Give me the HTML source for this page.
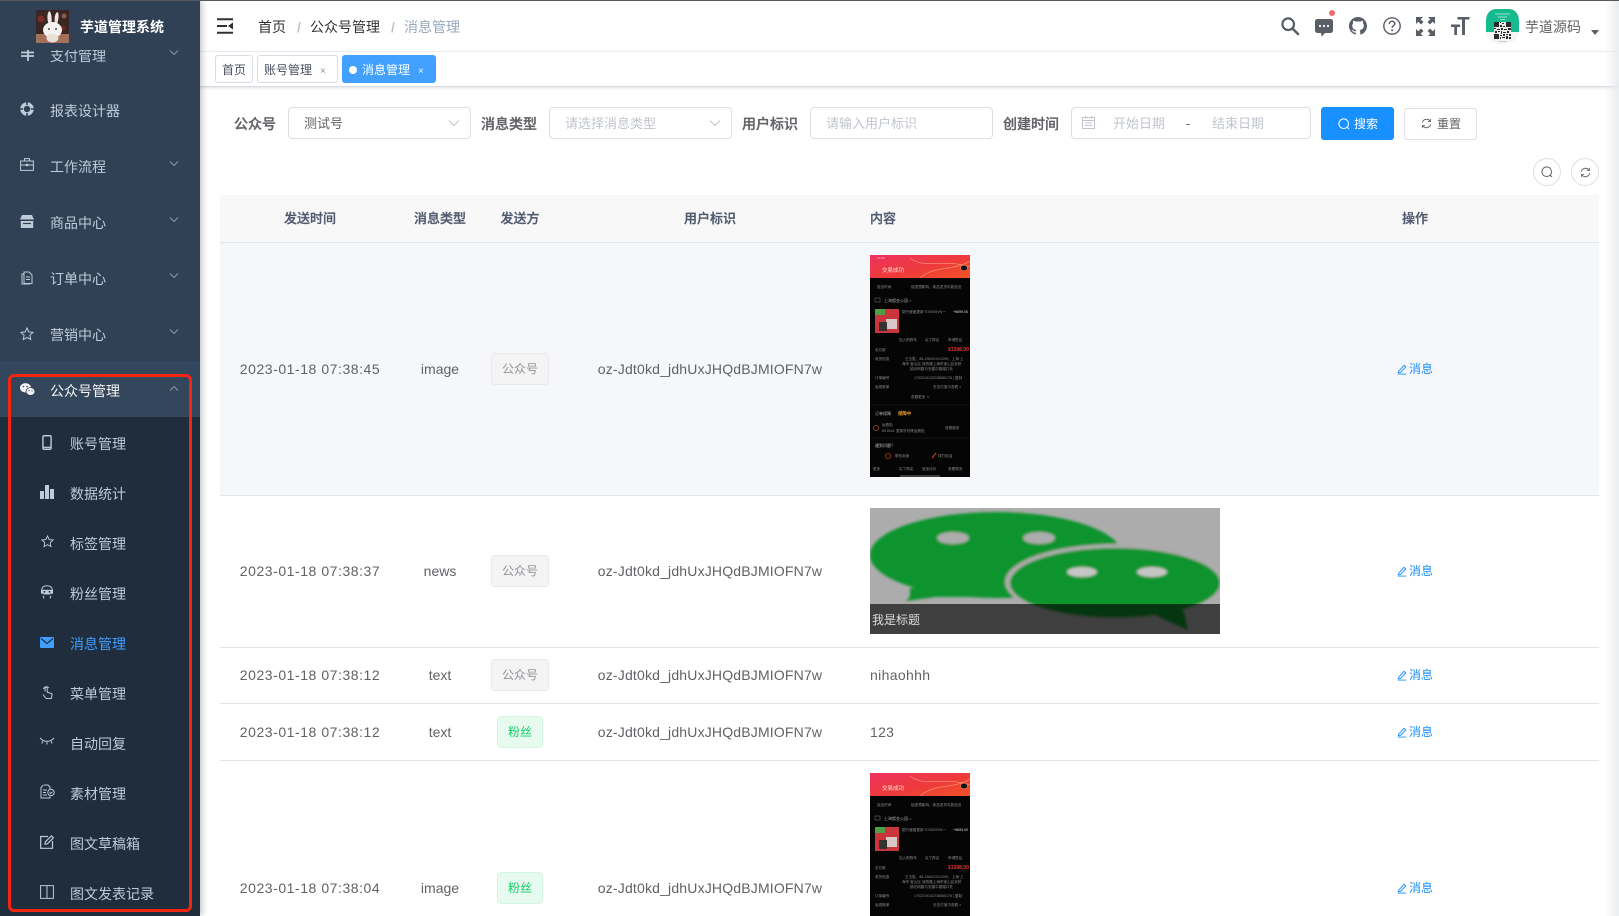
<!DOCTYPE html>
<html lang="zh-CN"><head><meta charset="utf-8"><title>消息管理</title>
<style>
html,body{margin:0;padding:0;width:1619px;height:916px;overflow:hidden;background:#fff}
body{position:relative;font-family:"Liberation Sans","Noto Sans CJK SC",sans-serif;font-size:14px;color:#606266;filter:blur(.35px)}
.a{position:absolute}
.t{position:absolute;white-space:nowrap;transform:translateY(-50%);line-height:20px}
.c{position:absolute;white-space:nowrap;transform:translate(-50%,-50%);line-height:20px}
svg{position:absolute;overflow:visible}
#side{position:absolute;left:0;top:0;width:200px;height:916px;background:#304156;overflow:hidden;box-shadow:2px 0 6px rgba(0,21,41,.25);z-index:3}
#side .t{margin:1px 0 0 -1px}
.m{color:#bfcbd9;font-size:14px}
.ic{fill:none;stroke:#bfcbd9;stroke-width:1}
.fl{fill:#bfcbd9;stroke:none}
.box{position:absolute;box-sizing:border-box;border:1px solid #dcdfe6;border-radius:4px;background:#fff;height:32px;top:107px}
.lb{font-weight:500;color:#606266;font-size:14px;margin-top:1px;-webkit-text-stroke:.3px #606266}
.ph{color:#c0c4cc;font-size:13px;margin-top:1px}
.th{font-weight:500;color:#515a6e;font-size:13px;margin-top:1px;-webkit-text-stroke:.3px #515a6e}
.ln{position:absolute;left:220px;width:1379px;height:1px;background:#dfe6ec}
.tag{position:absolute;box-sizing:border-box;height:32px;line-height:31px;text-align:center;font-size:12px;border-radius:4px;border:1px solid}
.g{background:#f4f4f5;border-color:#e9e9eb;color:#909399;left:491px;width:58px}
.f{background:#e7faf0;border-color:#d0f5e0;color:#13ce66;left:497px;width:46px}
.d{font-size:14px;letter-spacing:.55px;color:#606266}
.u{font-size:14px;letter-spacing:.18px;color:#606266}
.op{color:#1890ff;font-size:12px}
.pt{font-family:"Liberation Sans","Noto Sans CJK SC",sans-serif;fill:#8b8b8b;font-size:3.6px}
.ph-img{filter:blur(.35px)}
</style></head><body>

<!-- top strip -->
<div class="a" style="left:0;top:0;width:1619px;height:1px;background:#55585c;z-index:9"></div>

<!-- navbar -->
<div class="a" style="left:200px;top:0;width:1419px;height:52px;background:#fff;border-bottom:1px solid #eef0f3;box-sizing:border-box"></div>
<svg style="left:217px;top:18px" width="17" height="16" viewBox="0 0 17 16"><path d="M0 1.200h16M0 8h10M0 14.800h16" stroke="#303133" stroke-width="2" fill="none"/><path d="M11 8l5-3.500v7z" fill="#303133"/></svg>
<span class="t" style="left:258px;top:27px;color:#303133;font-size:14px">首页</span>
<span class="t" style="left:297px;top:27px;color:#c0c4cc;font-weight:700">/</span>
<span class="t" style="left:310px;top:27px;color:#303133;font-size:14px">公众号管理</span>
<span class="t" style="left:391px;top:27px;color:#c0c4cc;font-weight:700">/</span>
<span class="t" style="left:404px;top:27px;color:#97a8be;font-size:14px">消息管理</span>

<!-- top right icons -->
<svg style="left:1281px;top:17px" width="18" height="18" viewBox="0 0 18 18"><circle cx="7.200" cy="7.200" r="5.800" fill="none" stroke="#5a5e66" stroke-width="2.200"/><path d="M11.500 11.500L17 17" stroke="#5a5e66" stroke-width="2.600" stroke-linecap="round"/></svg>
<svg style="left:1315px;top:19px" width="18" height="18" viewBox="0 0 18 18"><path d="M2.500 0h13A2.500 2.500 0 0 1 18 2.500v9a2.500 2.500 0 0 1-2.500 2.500H10l-3.400 3.600L6 14H2.500A2.500 2.500 0 0 1 0 11.500v-9A2.500 2.500 0 0 1 2.500 0z" fill="#5a5e66"/><circle cx="5" cy="7" r="1.100" fill="#fff"/><circle cx="9" cy="7" r="1.100" fill="#fff"/><circle cx="13" cy="7" r="1.100" fill="#fff"/></svg>
<div class="a" style="left:1329px;top:10px;width:6px;height:6px;border-radius:50%;background:#f56c6c"></div>
<svg style="left:1349px;top:17px" width="18" height="18" viewBox="0 0 16 16"><path fill="#5a5e66" d="M8 0C3.580 0 0 3.580 0 8c0 3.540 2.290 6.530 5.470 7.590.4.070.55-.17.55-.38 0-.19-.01-.82-.01-1.490-2.010.37-2.530-.49-2.690-.94-.09-.23-.48-.94-.82-1.130-.28-.15-.68-.52-.01-.53.630-.01 1.080.58 1.230.82.720 1.210 1.870.87 2.330.66.070-.52.280-.87.510-1.070-1.780-.2-3.640-.89-3.640-3.950 0-.87.310-1.590.820-2.150-.08-.2-.36-1.020.08-2.120 0 0 .67-.21 2.200.82.640-.18 1.320-.27 2-.27s1.360.09 2 .27c1.530-1.040 2.200-.82 2.200-.82.440 1.100.16 1.920.08 2.120.51.560.82 1.270.82 2.150 0 3.070-1.870 3.750-3.650 3.950.29.250.54.730.54 1.480 0 1.070-.01 1.930-.01 2.200 0 .21.15.46.55.38A8.010 8.010 0 0 0 16 8c0-4.420-3.580-8-8-8z"/></svg>
<svg style="left:1383px;top:17px" width="18" height="18" viewBox="0 0 18 18"><circle cx="9" cy="9" r="8.200" fill="none" stroke="#5a5e66" stroke-width="1.400"/><path d="M6.300 7c0-1.700 1.300-2.700 2.800-2.700S11.800 5.300 11.800 6.800c0 1.800-2.700 2-2.700 4" fill="none" stroke="#5a5e66" stroke-width="1.500"/><circle cx="9.100" cy="13.200" r="1" fill="#5a5e66"/></svg>
<svg style="left:1416px;top:17px" width="19" height="19" viewBox="0 0 19 19"><path fill="#5a5e66" d="M0 0h7L4.700 2.300 7.500 5 5 7.500 2.300 4.700 0 7zM19 0v7l-2.300-2.300L14 7.500 11.500 5l2.800-2.700L12 0zM0 19v-7l2.300 2.300L5 11.500 7.500 14l-2.800 2.700L7 19zM19 19h-7l2.300-2.300L11.500 14l2.500-2.500 2.700 2.800L19 12z"/></svg>
<svg style="left:1451px;top:17px" width="19" height="18" viewBox="0 0 19 18"><path fill="#5a5e66" d="M6.500 0H18.500V2.500H14V18H11V2.500H6.500zM0 7.500H9V10H6V18H3.300V10H0z"/></svg>
<!-- avatar -->
<svg style="left:1486px;top:9px" width="33" height="35" viewBox="0 0 33 35"><path d="M0 23V12C0 4 5 0 10 0h13c5 0 10 4 10 12v11z" fill="#17b98f"/><path d="M0 23h33c0 7-7 12-16.500 12S0 30 0 23z" fill="#f4f6f5"/><rect x="8" y="13" width="17" height="17" fill="#ededed"/>
<path fill="#2b2b2b" d="M8 13h5v5H8zM20 13h5v5h-5zM8 25h5v5H8zM14 13h1v1h-1zM16 14h2v1h-2zM14 16h2v2h-2zM17 17h2v1h-2zM8 19h2v1H8zM11 20h3v1h-3zM15 19h2v2h-2zM18 20h3v1h-3zM22 19h3v2h-3zM9 22h2v2H9zM12 22h2v1h-2zM15 22h1v3h-1zM17 23h3v1h-3zM21 22h2v2h-2zM14 26h2v1h-2zM17 25h2v2h-2zM20 25h2v1h-2zM23 25h2v2h-2zM14 28h1v2h-1zM16 28h3v1h-3zM20 27h2v3h-2zM23 28h2v2h-2z"/>
<path d="M9 5h15M12 8h9M14 10.500h5" stroke="#bff0e2" stroke-width=".8"/><path d="M12 32.500h9" stroke="#bbb" stroke-width=".7"/></svg>
<span class="t" style="left:1525px;top:27px;font-size:14px;color:#606266">芋道源码</span>
<div class="a" style="left:1591px;top:30px;border:4px solid transparent;border-top:5px solid #5a5e66;border-bottom:0"></div>

<!-- tags view -->
<div class="a" style="left:200px;top:52px;width:1419px;height:34px;background:#fff;border-bottom:1px solid #d8dce5;box-shadow:0 1px 3px rgba(0,0,0,.12);box-sizing:content-box"></div>
<div class="a" style="left:215px;top:55px;width:38px;height:28px;box-sizing:border-box;border:1px solid #d8dce5;border-radius:3px;background:#fff;text-align:center;line-height:29px;font-size:12px;color:#495060">首页</div>
<div class="a" style="left:257px;top:55px;width:81px;height:28px;box-sizing:border-box;border:1px solid #d8dce5;border-radius:3px;background:#fff;line-height:29px;font-size:12px;color:#495060;padding-left:6px">账号管理<span style="position:absolute;left:62px;top:1px;font-size:10px;color:#909399">×</span></div>
<div class="a" style="left:342px;top:55px;width:94px;height:28px;box-sizing:border-box;border-radius:3px;background:#42a1ff;line-height:31px;font-size:12px;color:#fff;padding-left:20px"><span style="position:absolute;left:7px;top:11px;width:8px;height:8px;border-radius:50%;background:#fff"></span>消息管理<span style="position:absolute;left:76px;top:1px;font-size:10px;color:#e8f3ff">×</span></div>

<!-- form -->
<span class="t lb" style="left:234px;top:123px">公众号</span>
<div class="box" style="left:288px;width:183px"></div>
<span class="t" style="left:304px;top:124px;font-size:13px;color:#606266">测试号</span>
<svg style="left:448px;top:119px" width="12" height="8" viewBox="0 0 12 8"><path d="M1 1.500l5 5 5-5" fill="none" stroke="#c0c4cc" stroke-width="1"/></svg>
<span class="t lb" style="left:481px;top:123px">消息类型</span>
<div class="box" style="left:549px;width:183px"></div>
<span class="t ph" style="left:565px;top:123px">请选择消息类型</span>
<svg style="left:709px;top:119px" width="12" height="8" viewBox="0 0 12 8"><path d="M1 1.500l5 5 5-5" fill="none" stroke="#c0c4cc" stroke-width="1"/></svg>
<span class="t lb" style="left:742px;top:123px">用户标识</span>
<div class="box" style="left:810px;width:183px"></div>
<span class="t ph" style="left:826px;top:123px">请输入用户标识</span>
<span class="t lb" style="left:1003px;top:123px">创建时间</span>
<div class="box" style="left:1071px;width:240px"></div>
<svg style="left:1082px;top:116px" width="13" height="13" viewBox="0 0 13 13"><path d="M.5 1.500h12v11H.5zM.5 4.500h12M3 7h7M3 9.500h7M3.500 0v2.500M9.500 0v2.500" fill="none" stroke="#c0c4cc" stroke-width="1"/></svg>
<span class="t ph" style="left:1113px;top:123px">开始日期</span>
<span class="c" style="left:1188px;top:124px;font-size:13px;color:#606266">-</span>
<span class="t ph" style="left:1212px;top:123px">结束日期</span>

<div class="a" style="left:1321px;top:107px;width:73px;height:33px;border-radius:3px;background:#1890ff"></div>
<svg style="left:1338px;top:118px" width="12" height="12" viewBox="0 0 12 12"><circle cx="5.700" cy="5.700" r="4.800" fill="none" stroke="#fff" stroke-width="1"/><path d="M9 9l2 2" stroke="#fff" stroke-width="1"/></svg>
<span class="t" style="left:1354px;top:124px;font-size:12px;color:#fff">搜索</span>
<div class="a" style="left:1404px;top:108px;width:73px;height:32px;box-sizing:border-box;border:1px solid #dcdfe6;border-radius:3px;background:#fff"></div>
<svg style="left:1421px;top:118px" width="11" height="11" viewBox="0 0 12 12"><path d="M1.500 5A4.700 4.700 0 0 1 10 3.500M10.500 7A4.700 4.700 0 0 1 2 8.500" fill="none" stroke="#606266" stroke-width="1"/><path d="M10.500 1v3h-3M1.500 11V8h3" fill="none" stroke="#606266" stroke-width=".8"/></svg>
<span class="t" style="left:1437px;top:124px;font-size:12px;color:#606266">重置</span>

<div class="a" style="left:1533px;top:158px;width:28px;height:28px;box-sizing:border-box;border:1px solid #dcdfe6;border-radius:50%"></div>
<svg style="left:1541px;top:166px" width="12" height="12" viewBox="0 0 12 12"><circle cx="5.700" cy="5.700" r="4.800" fill="none" stroke="#606266" stroke-width="1"/><path d="M9 9l2 2" stroke="#606266" stroke-width="1"/></svg>
<div class="a" style="left:1571px;top:158px;width:28px;height:28px;box-sizing:border-box;border:1px solid #dcdfe6;border-radius:50%"></div>
<svg style="left:1580px;top:167px" width="11" height="11" viewBox="0 0 12 12"><path d="M1.500 5A4.700 4.700 0 0 1 10 3.500M10.500 7A4.700 4.700 0 0 1 2 8.500" fill="none" stroke="#606266" stroke-width="1"/><path d="M10.500 1v3h-3M1.500 11V8h3" fill="none" stroke="#606266" stroke-width=".8"/></svg>

<!-- table -->
<div class="a" style="left:220px;top:195px;width:1379px;height:47px;background:#f8f8f9"></div>
<div class="a" style="left:220px;top:243px;width:1379px;height:252px;background:#f5f7fa"></div>
<div class="ln" style="top:242px"></div>
<div class="ln" style="top:495px"></div>
<div class="ln" style="top:647px"></div>
<div class="ln" style="top:703px"></div>
<div class="ln" style="top:760px"></div>
<span class="c th" style="left:310px;top:218px">发送时间</span>
<span class="c th" style="left:440px;top:218px">消息类型</span>
<span class="c th" style="left:520px;top:218px">发送方</span>
<span class="c th" style="left:710px;top:218px">用户标识</span>
<span class="t th" style="left:870px;top:218px">内容</span>
<span class="c th" style="left:1415px;top:218px">操作</span>

<!-- row 1 -->
<span class="c d" style="left:310px;top:369px">2023-01-18 07:38:45</span>
<span class="c" style="left:440px;top:369px;font-size:14px">image</span>
<div class="tag g" style="top:353px">公众号</div>
<span class="c u" style="left:710px;top:369px">oz-Jdt0kd_jdhUxJHQdBJMIOFN7w</span>
<svg class="ph-img" style="left:870px;top:255px" width="100" height="222" viewBox="0 0 100 222">
<defs><linearGradient id="pg" x1="0" x2="1" y1="0" y2="1"><stop offset="0" stop-color="#ee3260"/><stop offset=".55" stop-color="#ee3a3a"/><stop offset="1" stop-color="#f35326"/></linearGradient></defs>
<rect width="100" height="222" fill="#050505"/><rect width="100" height="23" fill="url(#pg)"/>
<path d="M40 3C55 15 75 3 100 12M50 23C65 10 85 16 100 6" stroke="#f89a7a" stroke-width=".6" fill="none"/>
<text x="7" y="4" class="pt" style="fill:#ffd5d5;font-size:3px">12:25</text>
<text x="12" y="17" class="pt" style="fill:#ffe3d8;font-size:5.500px">交易成功</text>
<ellipse cx="94" cy="13" rx="3.500" ry="2.800" fill="#111" stroke="#f6a05a" stroke-width=".5"/>
<text x="7" y="33" class="pt">延迟时间</text><text x="41" y="33" class="pt">促促想影响，商品发货可能延迟</text>
<rect x="5" y="43" width="5" height="4" fill="none" stroke="#777" stroke-width=".5"/><text x="14" y="47" class="pt" style="font-size:4px;fill:#aaa">上海镀金公园 &gt;</text>
<rect x="5" y="54" width="24" height="24" fill="#c8353b"/><rect x="5" y="54" width="10" height="6" fill="#4f9d44"/><rect x="16" y="64" width="11" height="10" fill="#d8c8c8"/><rect x="9" y="67" width="8" height="9" fill="#333"/>
<text x="32" y="58" class="pt">甜行速度更新 ST4000VN一</text><text x="83" y="58" class="pt" style="fill:#ddd">+¥899.00</text>
<text x="29" y="86" class="pt">加入购物车</text><text x="55" y="86" class="pt">买了再买</text><text x="78" y="86" class="pt">申请售后</text>
<text x="5" y="96" class="pt">实付款</text><text x="78" y="96" class="pt" style="fill:#e8322e;font-size:5px;font-weight:700">¥1398.00</text>
<text x="5" y="105" class="pt">收货信息</text><text x="35" y="105" class="pt">王五胜，86-156XXXX1290，上海 上</text><text x="32" y="110" class="pt">海市 宝山区 双桥路上海市宝山区双桥</text><text x="40" y="115" class="pt">镇光明路与安建中路路口处</text>
<text x="5" y="124" class="pt">订单编号</text><text x="44" y="124" class="pt">1702219132238560176 | 复制</text>
<text x="5" y="133" class="pt">返现账单</text><text x="63" y="133" class="pt">去支付宝中查看 &gt;</text>
<text x="41" y="143" class="pt">查看更多 ∨</text>
<path d="M0 150h100" stroke="#222" stroke-width=".6"/>
<text x="5" y="160" class="pt" style="font-size:4px;fill:#bbb">订单保障</text><text x="28" y="160" class="pt" style="font-size:4.400px;fill:#f1a21e;font-weight:700">保障中</text>
<circle cx="6" cy="173" r="2.500" fill="none" stroke="#a5501f" stroke-width=".7"/><text x="12" y="171" class="pt">运费险</text><text x="12" y="177" class="pt">¥0.00x1 退换货可得运费险</text><text x="75" y="174" class="pt">查看服务</text>
<path d="M0 183h100" stroke="#222" stroke-width=".6"/>
<text x="5" y="192" class="pt" style="font-size:4px;fill:#bbb">遇到问题？</text>
<circle cx="18" cy="201" r="2.600" fill="none" stroke="#b8332a" stroke-width=".8"/><text x="25" y="202" class="pt">联系卖家</text>
<path d="M62 203l4-5" stroke="#b8332a" stroke-width="1.400"/><text x="68" y="202" class="pt">拨打电话</text>
<text x="3" y="215" class="pt">更多</text><text x="29" y="215" class="pt">买了再买</text><text x="52" y="215" class="pt">追加评价</text><text x="78" y="215" class="pt">查看物流</text>
<rect x="30" y="220.500" width="40" height="1" fill="#777"/></svg>
<svg style="left:1397px;top:364px" width="10" height="11" viewBox="0 0 12 13"><path d="M2 8.500L8.500 1.500l2 2L4 10l-2.500.5zM1 12h10" fill="none" stroke="#1890ff" stroke-width="1.100"/></svg>
<span class="t op" style="left:1409px;top:369px">消息</span>

<!-- row 2 -->
<span class="c d" style="left:310px;top:571px">2023-01-18 07:38:37</span>
<span class="c" style="left:440px;top:571px;font-size:14px">news</span>
<div class="tag g" style="top:555px">公众号</div>
<span class="c u" style="left:710px;top:571px">oz-Jdt0kd_jdhUxJHQdBJMIOFN7w</span>
<svg style="left:870px;top:508px" width="350" height="126" viewBox="0 0 350 126">
<defs><filter id="bl" x="-5%" y="-5%" width="110%" height="110%"><feGaussianBlur stdDeviation="1.400"/></filter><clipPath id="wc"><rect width="350" height="126"/></clipPath></defs>
<g clip-path="url(#wc)"><rect width="350" height="126" fill="#acacac"/>
<g filter="url(#bl)">
<ellipse cx="126" cy="47" rx="126" ry="43" fill="#10942e"/>
<path d="M50 78L36 93 L95 85z" fill="#10942e"/><path d="M40 80h100v9H40z" fill="#10942e"/>
<ellipse cx="83" cy="30" rx="16" ry="6" fill="#acacac"/><ellipse cx="169" cy="30" rx="16" ry="6" fill="#acacac"/>
<ellipse cx="245" cy="74" rx="110" ry="38" fill="#acacac"/>
<ellipse cx="245" cy="75" rx="105" ry="35" fill="#10942e"/>
<path d="M280 105l38 17-5-22z" fill="#10942e"/>
<ellipse cx="212" cy="64" rx="15" ry="5" fill="#c6c6c6"/><ellipse cx="282" cy="64" rx="15" ry="5" fill="#c6c6c6"/>
</g>
<rect y="96" width="350" height="30" fill="#000" fill-opacity=".63"/></g></svg>
<span class="t" style="left:872px;top:620px;font-size:12px;color:#ddd">我是标题</span>
<svg style="left:1397px;top:566px" width="10" height="11" viewBox="0 0 12 13"><path d="M2 8.500L8.500 1.500l2 2L4 10l-2.500.5zM1 12h10" fill="none" stroke="#1890ff" stroke-width="1.100"/></svg>
<span class="t op" style="left:1409px;top:571px">消息</span>

<!-- row 3 -->
<span class="c d" style="left:310px;top:675px">2023-01-18 07:38:12</span>
<span class="c" style="left:440px;top:675px;font-size:14px">text</span>
<div class="tag g" style="top:659px">公众号</div>
<span class="c u" style="left:710px;top:675px">oz-Jdt0kd_jdhUxJHQdBJMIOFN7w</span>
<span class="t" style="left:870px;top:675px;font-size:14px;letter-spacing:.35px">nihaohhh</span>
<svg style="left:1397px;top:670px" width="10" height="11" viewBox="0 0 12 13"><path d="M2 8.500L8.500 1.500l2 2L4 10l-2.500.5zM1 12h10" fill="none" stroke="#1890ff" stroke-width="1.100"/></svg>
<span class="t op" style="left:1409px;top:675px">消息</span>

<!-- row 4 -->
<span class="c d" style="left:310px;top:732px">2023-01-18 07:38:12</span>
<span class="c" style="left:440px;top:732px;font-size:14px">text</span>
<div class="tag f" style="top:716px">粉丝</div>
<span class="c u" style="left:710px;top:732px">oz-Jdt0kd_jdhUxJHQdBJMIOFN7w</span>
<span class="t" style="left:870px;top:732px;font-size:14px;letter-spacing:.3px">123</span>
<svg style="left:1397px;top:727px" width="10" height="11" viewBox="0 0 12 13"><path d="M2 8.500L8.500 1.500l2 2L4 10l-2.500.5zM1 12h10" fill="none" stroke="#1890ff" stroke-width="1.100"/></svg>
<span class="t op" style="left:1409px;top:732px">消息</span>

<!-- row 5 -->
<span class="c d" style="left:310px;top:888px">2023-01-18 07:38:04</span>
<span class="c" style="left:440px;top:888px;font-size:14px">image</span>
<div class="tag f" style="top:872px">粉丝</div>
<span class="c u" style="left:710px;top:888px">oz-Jdt0kd_jdhUxJHQdBJMIOFN7w</span>
<svg class="ph-img" style="left:870px;top:773px;overflow:hidden" width="100" height="143" viewBox="0 0 100 143">
<rect width="100" height="143" fill="#050505"/><rect width="100" height="23" fill="url(#pg)"/>
<path d="M40 3C55 15 75 3 100 12M50 23C65 10 85 16 100 6" stroke="#f89a7a" stroke-width=".6" fill="none"/>
<text x="12" y="17" class="pt" style="fill:#ffe3d8;font-size:5.500px">交易成功</text>
<ellipse cx="94" cy="13" rx="3.500" ry="2.800" fill="#111" stroke="#f6a05a" stroke-width=".5"/>
<text x="7" y="33" class="pt">延迟时间</text><text x="41" y="33" class="pt">促促想影响，商品发货可能延迟</text>
<rect x="5" y="43" width="5" height="4" fill="none" stroke="#777" stroke-width=".5"/><text x="14" y="47" class="pt" style="font-size:4px;fill:#aaa">上海镀金公园 &gt;</text>
<rect x="5" y="54" width="24" height="24" fill="#c8353b"/><rect x="5" y="54" width="10" height="6" fill="#4f9d44"/><rect x="16" y="64" width="11" height="10" fill="#d8c8c8"/><rect x="9" y="67" width="8" height="9" fill="#333"/>
<text x="32" y="58" class="pt">甜行速度更新 ST4000VN一</text><text x="83" y="58" class="pt" style="fill:#ddd">+¥899.00</text>
<text x="29" y="86" class="pt">加入购物车</text><text x="55" y="86" class="pt">买了再买</text><text x="78" y="86" class="pt">申请售后</text>
<text x="5" y="96" class="pt">实付款</text><text x="78" y="96" class="pt" style="fill:#e8322e;font-size:5px;font-weight:700">¥1398.00</text>
<text x="5" y="105" class="pt">收货信息</text><text x="35" y="105" class="pt">王五胜，86-156XXXX1290，上海 上</text><text x="32" y="110" class="pt">海市 宝山区 双桥路上海市宝山区双桥</text><text x="40" y="115" class="pt">镇光明路与安建中路路口处</text>
<text x="5" y="124" class="pt">订单编号</text><text x="44" y="124" class="pt">1702219132238560176 | 复制</text>
<text x="5" y="133" class="pt">返现账单</text><text x="63" y="133" class="pt">去支付宝中查看 &gt;</text>
</svg>
<svg style="left:1397px;top:883px" width="10" height="11" viewBox="0 0 12 13"><path d="M2 8.500L8.500 1.500l2 2L4 10l-2.500.5zM1 12h10" fill="none" stroke="#1890ff" stroke-width="1.100"/></svg>
<span class="t op" style="left:1409px;top:888px">消息</span>

<!-- right edge shadow -->
<div class="a" style="left:1604px;top:1px;width:15px;height:915px;background:linear-gradient(90deg,rgba(238,240,243,0),rgba(232,234,238,.9))"></div>

<!-- sidebar -->
<div id="side">
<div class="a" style="left:0;top:361px;width:200px;height:56px;background:#33465c"></div>
<div class="a" style="left:0;top:417px;width:200px;height:499px;background:#1f2d3d"></div>

<span class="t m" style="left:51px;top:55px">支付管理</span>
<svg style="left:21px;top:50px" width="14" height="11" viewBox="0 0 14 11"><path d="M0 2.500h13M0 6h13M7 0v11" stroke="#bfcbd9" stroke-width="1.800" fill="none"/></svg>

<!-- logo bar covers clipped item -->
<div class="a" style="left:0;top:0;width:200px;height:50px;background:#304156"></div>
<svg style="left:36px;top:10px" width="33" height="33" viewBox="0 0 33 33"><rect width="33" height="33" fill="#3a2622"/><rect y="24" width="33" height="9" fill="#a5705a"/><circle cx="5" cy="9" r="3.500" fill="#7a2d2a"/><circle cx="28" cy="6" r="2.500" fill="#8a5a4a"/><circle cx="27" cy="18" r="2.500" fill="#6d2a28"/><path d="M12.500 14C10.500 7 11.500 2 13.500 1c2 2 2.500 8 2 13zM19 14c-1-6 0-11 2.500-12 2 2 1 8-.5 12z" fill="#efe6e2"/><ellipse cx="16.500" cy="20" rx="9.500" ry="8" fill="#f6f2ef"/><ellipse cx="16.500" cy="28" rx="6" ry="4.500" fill="#e9e0da"/><circle cx="13" cy="19" r=".9" fill="#222"/><circle cx="20" cy="19" r=".9" fill="#222"/></svg>
<span class="t" style="left:81px;top:26px;color:#fff;font-weight:700;font-size:14px">芋道管理系统</span>
<svg style="left:169px;top:50px" width="10" height="6" viewBox="0 0 10 6"><path d="M1 .5l4 4 4-4" fill="none" stroke="#8a97a6" stroke-width="1"/></svg>

<!-- top-level items -->
<svg style="left:20px;top:102px" width="14" height="14" viewBox="0 0 14 14"><circle cx="7" cy="7" r="5" fill="none" stroke="#bfcbd9" stroke-width="3.500"/><path d="M7 0v3M7 11v3M0 7h3M11 7h3" stroke="#304156" stroke-width="1.600"/></svg>
<span class="t m" style="left:51px;top:110px">报表设计器</span>

<svg style="left:20px;top:158px" width="14" height="13" viewBox="0 0 14 13"><path d="M.6 3h12.800v9.400H.6zM4.500 3V.6h5V3M.6 7h12.800" class="ic"/><rect x="5.800" y="5.800" width="2.400" height="2.400" class="fl"/></svg>
<span class="t m" style="left:51px;top:166px">工作流程</span>
<svg style="left:169px;top:161px" width="10" height="6" viewBox="0 0 10 6"><path d="M1 .5l4 4 4-4" fill="none" stroke="#8a97a6" stroke-width="1"/></svg>

<svg style="left:20px;top:215px" width="14" height="13" viewBox="0 0 14 13"><path d="M2 0h10l2 4.500H0zM.8 6h12.400v7H.8z" class="fl"/><path d="M0 5.500h14" stroke="#304156" stroke-width=".8"/><path d="M3 8.500h8" stroke="#304156" stroke-width="1.200"/></svg>
<span class="t m" style="left:51px;top:222px">商品中心</span>
<svg style="left:169px;top:217px" width="10" height="6" viewBox="0 0 10 6"><path d="M1 .5l4 4 4-4" fill="none" stroke="#8a97a6" stroke-width="1"/></svg>

<svg style="left:21px;top:271px" width="12" height="14" viewBox="0 0 12 14"><path d="M3 1h5l3 3v8.500H3zM3 3H1v10h8" class="ic"/><path d="M5 6h4M5 8.500h4" class="ic"/></svg>
<span class="t m" style="left:51px;top:278px">订单中心</span>
<svg style="left:169px;top:273px" width="10" height="6" viewBox="0 0 10 6"><path d="M1 .5l4 4 4-4" fill="none" stroke="#8a97a6" stroke-width="1"/></svg>

<svg style="left:20px;top:327px" width="14" height="14" viewBox="0 0 14 14"><path d="M7 1l1.800 3.900 4.200.5-3.100 2.900.8 4.200L7 10.400l-3.700 2.100.8-4.200L1 5.400l4.200-.5z" class="ic"/></svg>
<span class="t m" style="left:51px;top:334px">营销中心</span>
<svg style="left:169px;top:329px" width="10" height="6" viewBox="0 0 10 6"><path d="M1 .5l4 4 4-4" fill="none" stroke="#8a97a6" stroke-width="1"/></svg>

<svg style="left:20px;top:383px" width="15" height="13" viewBox="0 0 15 13"><ellipse cx="5.500" cy="4.800" rx="5.500" ry="4.700" fill="#f4f4f5"/><ellipse cx="10.500" cy="8.500" rx="4.500" ry="3.900" fill="#f4f4f5" stroke="#304156" stroke-width=".8"/><circle cx="3.500" cy="3.500" r=".8" fill="#304156"/><circle cx="7" cy="3.500" r=".8" fill="#304156"/><circle cx="9" cy="7.800" r=".6" fill="#304156"/><circle cx="12" cy="7.800" r=".6" fill="#304156"/></svg>
<span class="t" style="left:51px;top:390px;color:#f4f4f5;font-size:14px">公众号管理</span>
<svg style="left:169px;top:385px" width="10" height="6" viewBox="0 0 10 6"><path d="M1 5.500l4-4 4 4" fill="none" stroke="#8a97a6" stroke-width="1"/></svg>

<!-- sub items -->
<svg style="left:42px;top:435px" width="10" height="15" viewBox="0 0 9 14"><rect x=".7" y=".7" width="7.600" height="12.600" rx="1" fill="none" stroke="#bfcbd9" stroke-width="1.300"/><path d="M.7 11.500h7.600" stroke="#bfcbd9" stroke-width="1.200"/></svg>
<span class="t m" style="left:71px;top:443px">账号管理</span>

<svg style="left:40px;top:485px" width="14" height="14" viewBox="0 0 14 14"><path d="M0 6h4v8H0zM5 0h4v14H5zM10 4h4v10h-4z" class="fl"/></svg>
<span class="t m" style="left:71px;top:493px">数据统计</span>

<svg style="left:41px;top:535px" width="13" height="13" viewBox="0 0 14 14"><path d="M7 1l1.800 3.900 4.200.5-3.100 2.900.8 4.200L7 10.400l-3.700 2.100.8-4.200L1 5.400l4.200-.5z" class="ic"/></svg>
<span class="t m" style="left:71px;top:543px">标签管理</span>

<svg style="left:40px;top:585px" width="14" height="14" viewBox="0 0 14 14"><path d="M2 7C1 2 4 .8 7 .8s6 1.200 5 6.200" class="ic" stroke-width="1.400"/><path d="M1 4.800h12v4H1z" class="fl"/><path d="M3 10.500l1 3M11 10.500l-1 3M4 9h6" class="ic"/><circle cx="4.500" cy="6.800" r=".9" fill="#1f2d3d"/><circle cx="9.500" cy="6.800" r=".9" fill="#1f2d3d"/></svg>
<span class="t m" style="left:71px;top:593px">粉丝管理</span>

<svg style="left:40px;top:637px" width="14" height="11" viewBox="0 0 14 11"><rect width="14" height="11" rx="1" fill="#409eff"/><path d="M1 1.500l6 5 6-5" fill="none" stroke="#1f2d3d" stroke-width="1.200"/></svg>
<span class="t" style="left:71px;top:643px;color:#409eff;font-size:14px">消息管理</span>

<svg style="left:42px;top:685px" width="11" height="14" viewBox="0 0 11 14"><path d="M3 6.500V3.200a1.100 1.100 0 0 1 2.200 0v4l4 1.200c.8.300 1 1 .800 1.800L9.300 13.500H4.200L1 9.500" class="ic"/><path d="M1.500 4A3 3 0 0 1 6.800 3" class="ic" stroke-width=".8"/></svg>
<span class="t m" style="left:71px;top:693px">菜单管理</span>

<svg style="left:40px;top:738px" width="14" height="8" viewBox="0 0 14 8"><path d="M1 1c3 3 9 3 12 0M3 3.200L1.800 5.500M7 4v2.500M11 3.200l1.200 2.300M0 0l1 1M14 0l-1 1" class="ic"/></svg>
<span class="t m" style="left:71px;top:743px">自动回复</span>

<svg style="left:40px;top:784px" width="15" height="15" viewBox="0 0 15 15"><path d="M4 1h4l2 2v2M10 12.500v1.500H1V3.500L3.500 1" class="ic"/><path d="M3 6h4M3 8.500h3M3 11h4" class="ic" stroke-width=".8"/><circle cx="11" cy="8.500" r="3.200" class="ic"/><path d="M9.600 8.500l1 1 1.800-1.800" class="ic" stroke-width=".8"/></svg>
<span class="t m" style="left:71px;top:793px">素材管理</span>

<svg style="left:40px;top:835px" width="14" height="14" viewBox="0 0 14 14"><path d="M8 1.500H.7v11.800h11.800V6" class="ic" style="stroke-width:1.200"/><path d="M5 9.200l.4-2.400L11.400.8l2 2-6 6z" class="ic" style="stroke-width:1.200"/></svg>
<span class="t m" style="left:71px;top:843px">图文草稿箱</span>

<svg style="left:40px;top:885px" width="14" height="14" viewBox="0 0 14 14"><path d="M.6.600h6.400v12.800H.6zM7 .6h6.400v12.800H7z" class="ic"/></svg>
<span class="t m" style="left:71px;top:893px">图文发表记录</span>

<!-- red highlight -->
<div class="a" style="left:8px;top:374px;width:184px;height:538px;box-sizing:border-box;border:3px solid #f5260f;border-radius:6px"></div>
</div>
</body></html>
